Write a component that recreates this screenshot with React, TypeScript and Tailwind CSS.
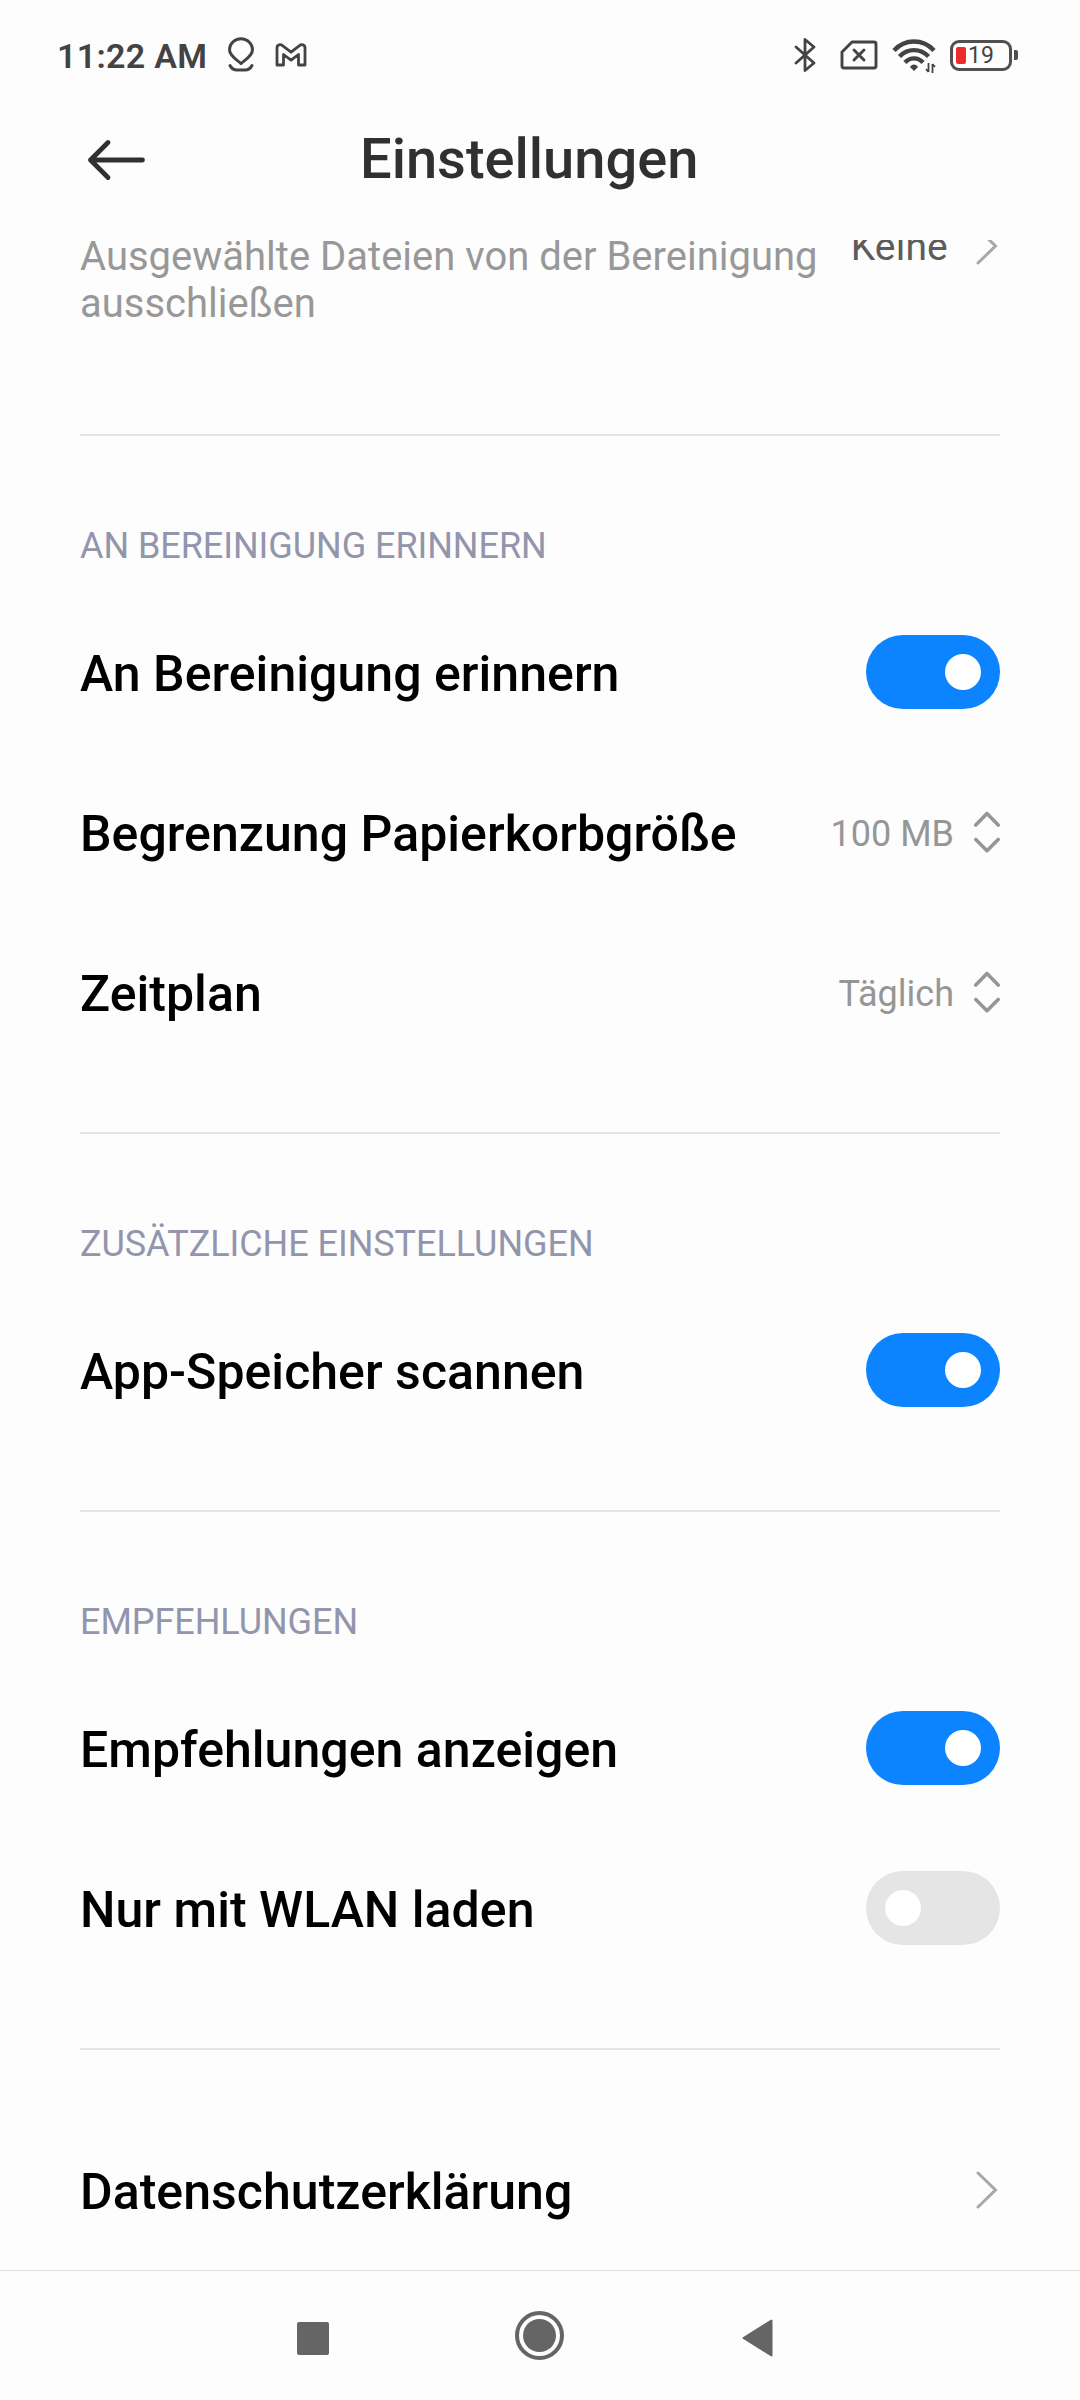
import { useState } from "react";
import type { ReactNode } from "react";
import clsx from "clsx";

const StatusBar = () => (
    <div className="h-[100px] shrink-0 flex items-center justify-between pl-[57px] pr-[62px] pt-[10px] text-[#434343]">
        <div className="flex items-center">
            <span className="w-[150px] pt-px text-[34px] leading-[40px] font-semibold tracking-[0.3px] whitespace-nowrap">11:22 AM</span>
            <svg className="ml-[20px] w-[28px] h-[36px]" viewBox="0 0 28 36" fill="none" stroke="currentColor" strokeWidth="3" strokeLinecap="round" strokeLinejoin="round">
                <path d="M14 26.5 C10 23 2.5 19 2.5 12.8 A11.5 11 0 0 1 25.5 12.8 C25.5 19 18 23 14 26.5Z" />
                <path d="M3 28.5 C4.5 31.5 7 33 10 33 H18 C21 33 23.5 31.5 25 28.5" />
            </svg>
            <svg className="ml-[20px] w-[32px] h-[24px]" viewBox="0 0 32 24" fill="none" stroke="currentColor" strokeWidth="2.8" strokeLinejoin="round">
                <path d="M2 22 V5 C2 1.5 5.5 1 7.5 2.6 L16 9.2 L24.5 2.6 C26.5 1 30 1.5 30 5 V22 H23.5 V11.5 L16 17.2 L8.5 11.5 V22 Z" />
            </svg>
        </div>

        <div className="flex items-center">
            <svg className="w-[22px] h-[36px]" viewBox="0 0 22 36" fill="none" stroke="currentColor" strokeWidth="2.8" strokeLinecap="round" strokeLinejoin="round">
                <path d="M2 10 L20 26 L11 33.5 V2.5 L20 10 L2 26" />
            </svg>
            <svg className="ml-[24px] w-[38px] h-[30px]" viewBox="0 0 38 30" fill="none" stroke="currentColor" strokeWidth="2.9" strokeLinecap="round" strokeLinejoin="round">
                <path d="M12 2 H34 Q36 2 36 4 V26 Q36 28 34 28 H4 Q2 28 2 26 V12 Z" />
                <path d="M14 10 L24 20 M24 10 L14 20" />
            </svg>
            <svg className="ml-[14px] w-[44px] h-[36px]" viewBox="0 0 44 36" fill="none" stroke="currentColor" strokeWidth="4.4">
                <path d="M2 13.5 C13 1.5 31 1.5 42 13.5" />
                <path d="M7.5 19.5 C15.5 11 28.5 11 36.5 19.5" />
                <path d="M13 25.5 C18 20 26 20 31 25.5" />
                <path d="M18 30 C19.5 26.5 24.5 26.5 26 30 L22 34Z" fill="currentColor" stroke="none" />
                <path d="M36.5 26 V35 M34 32 L36.5 35 M40.5 36 V27 M40.5 27 L43 30" strokeWidth="1.8" />
            </svg>
            <div className="ml-[14px] flex items-center">
                <div className="w-[62px] h-[31px] rounded-[9px] border-[3.5px] border-[#505050] flex items-center pl-[3px]">
                    <span className="w-[10px] h-[17px] rounded-[2px] bg-[#ec2b2b]" />
                    <span className="ml-[2px] pt-[2px] text-[23px] leading-[24px] font-normal">19</span>
                </div>
                <span className="ml-[2px] w-[4px] h-[10px] rounded-r-[2px] bg-[#505050]" />
            </div>
        </div>
    </div>
);

const Header = () => (
    <header className="h-[140px] shrink-0 flex items-center pl-[87px]">
        <svg className="w-[60px] h-[42px] mt-[-20px] text-[#303030]" viewBox="0 0 60 42" fill="none" stroke="currentColor" strokeWidth="4.8" strokeLinecap="round" strokeLinejoin="round">
            <path d="M21 3.5 L3.5 21 L21 38.5 M3.5 21 H55.5" />
        </svg>
        <h1 className="ml-[213px] mt-[-22px] text-[56px] leading-[64px] font-medium text-[#303030] whitespace-nowrap">Einstellungen</h1>
    </header>
);

const Chevron = () => (
    <svg className="mr-[2px] w-[22px] h-[38px] text-[#a8a8a8]" viewBox="0 0 22 38" fill="none" stroke="currentColor" strokeWidth="3" strokeLinecap="round">
        <path d="M2 2 L19.5 19 L2 36" />
    </svg>
);

const UpDown = () => (
    <svg className="ml-[20px] mt-[-1px] w-[26px] h-[42px]" viewBox="0 0 26 42" fill="none" stroke="currentColor" strokeWidth="3.6" strokeLinecap="round" strokeLinejoin="round">
        <path d="M1.8 14 L13 2.6 L24.2 14 M1.8 28.5 L13 39.8 L24.2 28.5" />
    </svg>
);

const Toggle = ({ initial }: { initial: boolean }) => {
    const [on, setOn] = useState(initial);

    return (
        <button
            role="switch"
            aria-checked={on}
            onClick={() => setOn(!on)}
            className={clsx(
                "w-[134px] h-[74px] rounded-full flex items-center px-[19px]",
                on ? "bg-[#0d84ff] justify-end" : "bg-[#e5e5e5] justify-start"
            )}
        >
            <span className="w-[36px] h-[36px] rounded-full bg-white" />
        </button>
    );
};

const Row = ({ label, children }: { label: string; children: ReactNode }) => (
    <div className="h-[160px] flex items-center justify-between">
        <span className="pt-[4px] text-[50px] leading-[58px] tracking-[0.04px] font-medium text-black whitespace-nowrap">{label}</span>
        {children}
    </div>
);

const Select = ({ value }: { value: string }) => (
    <div className="flex items-center text-[36px] leading-[42px] text-[#969696]">
        <span className="pt-[3px]">{value}</span>
        <UpDown />
    </div>
);

const Section = ({ title, children }: { title: string; children: ReactNode }) => (
    <section className="border-b-2 border-[#e4e4e4] pt-[89px] pb-[60px]">
        <h2 className="h-[67px] text-[36px] leading-[42px] tracking-[-0.06px] text-[#9295ac] whitespace-nowrap">{title}</h2>
        {children}
    </section>
);

const NavBar = () => (
    <nav className="h-[130px] shrink-0 border-t border-[#dedede] flex items-start text-[#656565]">
        <span className="ml-[297px] mt-[51px] w-[32px] h-[33px] rounded-[2px] bg-current" />
        <span className="ml-[186px] mt-[40px] w-[49px] h-[49px] rounded-full border-[4px] border-current flex items-center justify-center">
            <span className="w-[33px] h-[33px] rounded-full bg-current" />
        </span>
        <svg className="ml-[178px] mt-[48px] w-[31px] h-[38px]" viewBox="0 0 31 38" fill="currentColor" stroke="currentColor" strokeWidth="2" strokeLinejoin="round">
            <path d="M1.5 19 L29.5 1.5 V36.5 Z" />
        </svg>
    </nav>
);

export default function App() {
    return (
        <div className="w-[1080px] h-[2400px] flex flex-col overflow-hidden bg-[#fdfdfd] font-['Roboto',sans-serif]">
            <StatusBar />
            <Header />

            <main className="flex-1 min-h-0 overflow-hidden px-[80px]">
                {/* Scrolled partly under the header */}
                <div className="h-[203px] -mt-[7px] flex items-start justify-between border-b-2 border-[#e4e4e4]">
                    <p className="w-[750px] text-[40px] leading-[47px] text-[#989898]">
                        Ausgewählte Dateien von der Bereinigung ausschließen
                    </p>
                    <div className="flex items-center -mt-[10px] text-[39px] leading-[44px] text-[#5c5c5c]">
                        <span className="pt-[2px] mr-[28px] tracking-[0.2px]">Keine</span>
                        <Chevron />
                    </div>
                </div>

                <Section title="AN BEREINIGUNG ERINNERN">
                    <Row label="An Bereinigung erinnern"><Toggle initial={true} /></Row>
                    <Row label="Begrenzung Papierkorbgröße"><Select value="100 MB" /></Row>
                    <Row label="Zeitplan"><Select value="Täglich" /></Row>
                </Section>

                <Section title="ZUSÄTZLICHE EINSTELLUNGEN">
                    <Row label="App-Speicher scannen"><Toggle initial={true} /></Row>
                </Section>

                <Section title="EMPFEHLUNGEN">
                    <Row label="Empfehlungen anzeigen"><Toggle initial={true} /></Row>
                    <Row label="Nur mit WLAN laden"><Toggle initial={false} /></Row>
                </Section>

                <div className="pt-[60px]">
                    <Row label="Datenschutzerklärung"><Chevron /></Row>
                </div>
            </main>

            <NavBar />
        </div>
    );
}
